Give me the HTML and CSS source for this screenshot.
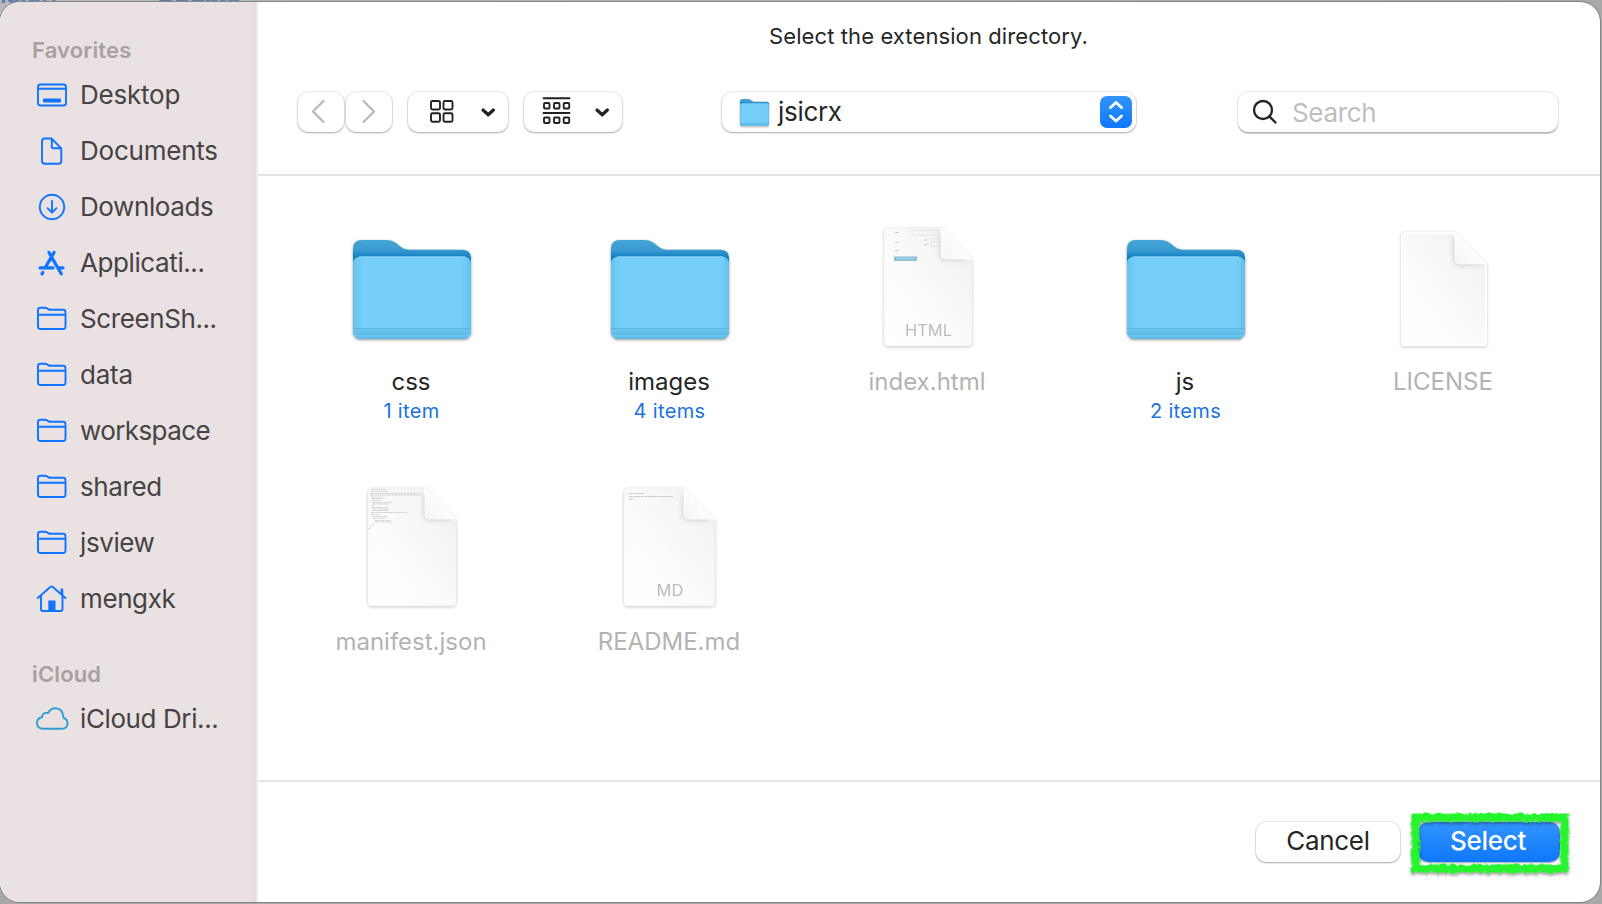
FILE: index.html
```
<!DOCTYPE html>
<html lang="en">
<head>
<meta charset="utf-8">
<title>Select the extension directory</title>
<link rel="stylesheet" href="styles.css">
</head>
<body>
<svg class="defs" width="0" height="0" aria-hidden="true">
  <defs>
    <linearGradient id="back" x1="0" y1="0" x2="0" y2="1"><stop offset="0" stop-color="#45a5d8"/><stop offset=".2" stop-color="#3a9bd0"/><stop offset=".34" stop-color="#1180c2"/><stop offset="1" stop-color="#1180c2"/></linearGradient>
    <linearGradient id="front" x1="0" y1="0" x2="1" y2="0"><stop offset="0" stop-color="#68c3ee"/><stop offset=".08" stop-color="#76cff8"/><stop offset=".92" stop-color="#76cff8"/><stop offset="1" stop-color="#64c0ec"/></linearGradient>
    <linearGradient id="paper" x1="0" y1="1" x2="1" y2="0"><stop offset="0" stop-color="#fff"/><stop offset=".4" stop-color="#fcfcfc"/><stop offset="1" stop-color="#efefef"/></linearGradient>
    <linearGradient id="flap" x1="0" y1="1" x2=".6" y2=".4"><stop offset="0" stop-color="#f4f4f4"/><stop offset="1" stop-color="#fff"/></linearGradient>
    <filter id="soft" x="-30%" y="-30%" width="160%" height="160%"><feGaussianBlur stdDeviation="2.4"/></filter>
    <filter id="rough" x="-5%" y="-10%" width="110%" height="120%"><feTurbulence type="fractalNoise" baseFrequency=".22" numOctaves="2" seed="4"/><feDisplacementMap in="SourceGraphic" scale="5" xChannelSelector="R" yChannelSelector="G"/></filter>
  </defs>
  <symbol id="i-folder" viewBox="0 0 32 28"><path d="M2 21.500V5Q2 2.800 4.200 2.800H9q1.300 0 2.200.7l1 .6q.9.600 2.200.600H27Q29.500 4.700 29.500 7.200v14.300Q29.500 24 27 24H4.500Q2 24 2 21.500ZM2 9.700H29.500"/></symbol>
  <symbol id="folder" viewBox="0 0 118 99">
    <path fill="url(#back)" d="M0 9Q0 0 9 0H34Q39 0 43 3L47.500 6.800Q51 9.700 56 9.700H109Q118 9.700 118 18V50H0Z"/>
    <path fill="url(#front)" d="M0 24Q0 16.500 8 16.500H110Q118 16.500 118 24V90Q118 99 109 99H9Q0 99 0 90Z"/>
    <path fill="#67c2ee" d="M0 88H118V90Q118 99 109 99H9Q0 99 0 90Z"/>
    <path fill="none" stroke="#5cb6e2" d="M0 88.500H118M0 93.500H118M4 98.300H114"/>
    <path fill="none" stroke="#8cd7fa" d="M6 17H112"/>
  </symbol>
</svg>

<div class="backdrop" aria-hidden="true"><span class="behind behind-a">ision</span><span class="behind behind-b">Update</span></div>

<div class="dialog">
  <aside class="sidebar">
    <h2 class="group">Favorites</h2>
    <ul class="places">
      <li class="place"><svg class="glyph" viewBox="0 0 32 28"><rect x="2" y="3.500" width="28" height="21" rx="2.500"/><path d="M2 7.800H30"/><path class="solid" d="M8 17.500h16q1 0 1 1v2q0 1-1 1H8q-1 0-1-1v-2q0-1 1-1Z"/></svg><span>Desktop</span></li>
      <li class="place"><svg class="glyph" viewBox="0 0 32 28"><path d="M8.800 1.500H15.500L25.300 11.300V24Q25.300 26.700 22.500 26.700H8.800Q6 26.700 6 24V4.300Q6 1.500 8.800 1.500ZM15.800 2V9.500Q15.800 11.300 17.600 11.300H25"/></svg><span>Documents</span></li>
      <li class="place"><svg class="glyph" viewBox="0 0 32 28"><circle cx="16" cy="14" r="12.200"/><path d="M16 8V19.500M11.500 15.200L16 19.700L20.500 15.200"/></svg><span class="w-down">Downloads</span></li>
      <li class="place"><svg class="glyph" viewBox="0 0 32 28"><path class="thick" d="M4 18.800H17M23 18.800H27M13 3.500L25.200 24.800M18 3.500L9.300 18.500M6.800 23.500L6 24.800"/></svg><span class="w-down">Applicati...</span></li>
      <li class="place"><svg class="glyph"><use href="#i-folder"/></svg><span class="w-down">ScreenSh...</span></li>
      <li class="place"><svg class="glyph"><use href="#i-folder"/></svg><span>data</span></li>
      <li class="place"><svg class="glyph"><use href="#i-folder"/></svg><span class="w-work">workspace</span></li>
      <li class="place"><svg class="glyph"><use href="#i-folder"/></svg><span class="w-down">shared</span></li>
      <li class="place"><svg class="glyph"><use href="#i-folder"/></svg><span class="w-down">jsview</span></li>
      <li class="place"><svg class="glyph" viewBox="0 0 32 28"><path d="M1.800 13L14.600 1.800Q15.600 1 16.600 1.800L29.400 13M5 11V24Q5 26 7 26H24.500Q26.500 26 26.500 24V11"/><path class="solid" d="M12.300 26V15.500H19.500V26ZM24.500 3.500H27.200V11L24.500 8.500Z"/></svg><span class="w-down">mengxk</span></li>
    </ul>
    <h2 class="group group-cloud">iCloud</h2>
    <ul class="places">
      <li class="place"><svg class="glyph cloud" viewBox="0 0 32 28"><path d="M7.500 23.800Q1 23.800 1 17.800Q1 13 6 12.200Q6.500 7 12 8Q14.500 3.200 19.500 3.200Q27 3.200 27.500 13Q31.500 14 31.500 18.300Q31.500 23.800 25.500 23.800Z"/></svg><span class="w-down">iCloud Dri...</span></li>
    </ul>
  </aside>

  <main class="main">
    <header class="header">
      <h1 class="title">Select the extension directory.</h1>
      <div class="toolbar">
        <div class="nav">
          <button class="control arrow"><svg width="46" height="40"><path d="M25.500 9L15 19.500L25.500 30"/></svg></button>
          <button class="control arrow"><svg width="46" height="40"><path d="M17.500 9L28 19.500L17.500 30"/></svg></button>
        </div>
        <button class="control view"><svg width="101" height="40"><rect x="23" y="9" width="9" height="8.500" rx="1.500"/><rect x="35.500" y="9" width="9" height="8.500" rx="1.500"/><rect x="23" y="21.300" width="9" height="8.500" rx="1.500"/><rect x="35.500" y="21.300" width="9" height="8.500" rx="1.500"/><path class="chev" d="M75 18L80.200 22.800L85.400 18"/></svg></button>
        <button class="control arrange"><svg width="98" height="40"><path d="M19.500 6.300H45.500M19.500 21H45.500"/><g><rect x="20" y="11" width="5.500" height="5.500" rx="1"/><rect x="30" y="11" width="5.500" height="5.500" rx="1"/><rect x="39.700" y="11" width="5.500" height="5.500" rx="1"/><rect x="20" y="25.500" width="5.500" height="5.500" rx="1"/><rect x="30" y="25.500" width="5.500" height="5.500" rx="1"/><rect x="39.700" y="25.500" width="5.500" height="5.500" rx="1"/></g><path class="chev" d="M73 18L78.200 22.800L83.400 18"/></svg></button>
        <button class="control path"><svg class="mini" preserveAspectRatio="none" viewBox="0 0 118 99"><use href="#folder" width="118" height="99"/></svg><span class="label">jsicrx</span><svg class="stepper" width="32" height="32"><path d="M10.500 11.500L16 6.500L21.500 11.500M10.500 20L16 25L21.500 20"/></svg></button>
        <div class="control search"><svg width="28" height="28"><circle cx="12" cy="12" r="9"/><path d="M18.400 18.400L24.500 24.500"/></svg><span>Search</span></div>
      </div>
    </header>

    <section class="files">
      <div class="file"><div class="art"><svg class="folder"><use href="#folder"/></svg></div><div class="name">css</div><div class="count">1 item</div></div>
      <div class="file"><div class="art"><svg class="folder"><use href="#folder"/></svg></div><div class="name">images</div><div class="count">4 items</div></div>
      <div class="file dim"><div class="art"><svg class="doc" width="88" height="118"><path class="sheet" d="M4 0H57L88 31V114Q88 118 84 118H4Q0 118 0 114V4Q0 0 4 0Z"/><path class="faint" d="M28 2.500H57M28 7H57M28 2.500V7M47 10.500H57M47 14H57M47 18.500H57M47 10.500V18.500"/><path class="lines" d="M11 4.500h4M11 14.500h3M11 22.500h4M40 12h4M40 16.500h5"/><path fill="#8dbedc" d="M10 28.500h23v4.500H10z"/><path stroke="#bcdced" stroke-dasharray="2 .7" d="M12 30.700h19"/><path class="fold-shade" d="M56 5V27Q56 32 61 32H84Z"/><path class="flap" d="M57 0L88 31H61Q57 31 57 27Z"/><text x="44.500" y="107.500">HTML</text></svg></div><div class="name">index.html</div></div>
      <div class="file"><div class="art"><svg class="folder"><use href="#folder"/></svg></div><div class="name">js</div><div class="count">2 items</div></div>
      <div class="file dim"><div class="art"><svg class="doc blank" width="86" height="114"><path class="sheet" d="M3 0H54L86 32V111Q86 114 83 114H3Q0 114 0 111V3Q0 0 3 0Z"/><path class="rim" d="M3 1H54L85 32V110Q85 113 82 113H4Q1 113 1 110V3"/><path class="fold-shade" d="M53 5V28Q53 33 58 33H82Z"/><path class="flap" d="M54 0L86 32H58Q54 32 54 28Z"/></svg></div><div class="name">LICENSE</div></div>
      <div class="file dim"><div class="art"><svg class="doc manifest" width="89" height="118"><path class="sheet" d="M4 0H57L88 31V114Q88 118 84 118H4Q0 118 0 114V4Q0 0 4 0Z"/><path class="lines code" d="M3 1.500h15M3 3.500h17M2 5.500h50M2 7h52M3 9h12M4 10.500h13M3 12.500h10M4 14.500h20M5 16h16M3 17.500h3M4 19.500h16M5 21h16M4 22.500h17M3 24.500h36M3 26.500h8M4 28.500h16M5 30.500h12M7 32.500h16M7 34h17M4 36.500h2M2 38.500h2M0 40.500h2"/><path class="fold-shade" d="M56 5V27Q56 32 61 32H84Z"/><path class="flap" d="M57 0L88 31H61Q57 31 57 27Z"/></svg></div><div class="name">manifest.json</div></div>
      <div class="file dim"><div class="art"><svg class="doc readme" width="91" height="118"><path class="sheet" d="M4 0H60L91 31V114Q91 118 87 118H4Q0 118 0 114V4Q0 0 4 0Z"/><path class="lines" d="M5 5.500h15M5 8.500h44M5 11h6"/><path class="fold-shade" d="M59 5V27Q59 32 64 32H87Z"/><path class="flap" d="M60 0L91 31H64Q60 31 60 27Z"/><text x="46" y="107.500">MD</text></svg></div><div class="name">README.md</div></div>
    </section>

    <footer class="footer">
      <button class="control action">Cancel</button>
      <div class="primary-wrap">
        <button class="control action primary">Select</button>
        <svg class="marker" width="168" height="70"><rect x="9.500" y="9.500" width="149" height="51"/></svg>
      </div>
    </footer>
  </main>
</div>
</body>
</html>
```
FILE: styles.css
```
* { box-sizing: border-box; }
body {
  margin: 0;
  width: 1602px;
  height: 904px;
  padding: 2px 2px 2px 0;
  overflow: hidden;
  background: #a8a8a8;
  font-family: Inter, "Liberation Sans", sans-serif;
  color: #262626;
}
ul { list-style: none; margin: 0; padding: 0; }
h1, h2 { margin: 0; }
button { font: inherit; color: inherit; padding: 0; border: 0; }
svg { display: block; flex: none; }
.defs { position: absolute; }

.backdrop { position: absolute; left: 0; top: 0; width: 1602px; height: 20px; overflow: hidden; background: linear-gradient(90deg, #b9b9b9, #a8a8a8); }
.behind { position: absolute; top: -21px; font-size: 26px; line-height: 30px; font-weight: 600; color: #5a80b4; }
.behind-a { left: 0; letter-spacing: -.6px; }
.behind-b { left: 156px; letter-spacing: -1.2px; }

.dialog {
  position: relative;
  display: flex;
  height: 900px;
  border-radius: 20px;
  overflow: hidden;
  background: #fff;
  box-shadow: 0 0 0 1px #858585;
}
.sidebar { width: 258px; padding-top: 34px; background: linear-gradient(90deg, #e9e1e2 250px, #e4dcdd 256px) padding-box; border-right: 2px solid #eeecec; }
.group { height: 28px; margin: 0 0 3px 32px; font-size: 22px; line-height: 28px; font-weight: 600; color: #aaa0a1; letter-spacing: .15px; }
.group-cloud { margin-top: 33px; }
.place { display: flex; align-items: center; height: 56px; padding-left: 36px; gap: 12px; font-size: 26px; line-height: 32px; color: #464344; letter-spacing: -.22px; white-space: nowrap; }
.w-down { letter-spacing: -.4px; }
.w-work { letter-spacing: -.6px; }
.glyph { width: 32px; height: 28px; overflow: visible; fill: none; stroke: #0f74ff; stroke-width: 1.9; stroke-linecap: round; stroke-linejoin: round; }
.glyph .solid { fill: #0f74ff; stroke: none; }
.glyph .thick { stroke-width: 3.2; }
.cloud { stroke: #2f9fd0; }

.main { flex: 1; display: flex; flex-direction: column; }
.header { height: 174px; border-bottom: 2px solid #e4e4e4; }
.title { margin-top: 19px; padding-right: 1px; height: 30px; text-align: center; font-size: 22px; line-height: 30px; font-weight: 400; letter-spacing: .1px; }
.toolbar { display: flex; align-items: center; margin: 41px 42px 0 40px; height: 40px; }
.control { height: 40px; border-radius: 10px; background: #fff; box-shadow: 0 0 0 1px rgba(0,0,0,.07), 0 1px 2px rgba(0,0,0,.28); }
.control svg { fill: none; stroke: #222; stroke-width: 1.900; stroke-linecap: round; stroke-linejoin: round; }
.nav { display: flex; gap: 2px; margin-right: 16px; }
.arrow { width: 46px; }
.control.arrow svg { stroke: #b8b8b8; stroke-width: 2.200; }
.control .chev { stroke-width: 3.200; }
.view { width: 100px; margin-right: 16px; }
.arrange { width: 98px; margin-right: 100px; }
.path { display: flex; align-items: center; width: 414px; padding: 0 4px 0 18px; margin-right: 102px; font-size: 26px; }
.label { padding-bottom: 2px; letter-spacing: -.3px; }
.mini { width: 29px; height: 27px; margin-right: 9px; filter: drop-shadow(0 1px 1px rgba(0,0,0,.3)); }
.control .mini { stroke: none; }
.control .stepper { margin-left: auto; border-radius: 7px; background: linear-gradient(#3294fc, #0f78fb); stroke: #fff; stroke-width: 2.800; }
.search { display: flex; align-items: center; width: 320px; padding-left: 13px; gap: 13px; font-size: 26px; letter-spacing: -.35px; color: #bebebe; box-shadow: 0 0 0 1px rgba(0,0,0,.08), 0 1.500px 1px rgba(0,0,0,.22); }
.search svg { stroke-width: 2.300; }

.files { display: grid; grid-template-columns: repeat(5, 258px); grid-auto-rows: 260px; height: 604px; padding: 47px 0 0 25px; }
.file { display: flex; flex-direction: column; align-items: center; }
.art { display: flex; align-items: center; justify-content: center; height: 128px; }
.folder { width: 118px; height: 99px; margin-top: 4px; filter: drop-shadow(0 1.500px 1.500px rgba(0,0,0,.4)); }
.name { margin-top: 16px; padding-right: 2px; font-size: 24px; line-height: 30px; white-space: nowrap; }
.count { padding-right: 1px; line-height: 29px; font-size: 20px; color: #1a73dc; letter-spacing: .35px; }
.dim .name { color: #b3b3b3; }
.doc { overflow: visible; filter: drop-shadow(0 1.500px 1.500px rgba(0,0,0,.2)); }
.blank { margin-top: 4px; }
.readme { margin-right: 2px; }
.sheet { fill: url(#paper); stroke: #ededed; stroke-width: .6; }
.rim { fill: none; stroke: #fff; stroke-width: 2; }
.fold-shade { fill: #c9c9c9; filter: url(#soft); }
.flap { fill: url(#flap); stroke: #fff; stroke-width: .8; }
.lines { fill: none; stroke: #c8c8c8; stroke-width: 1; stroke-dasharray: 3 .6 2 .5; }
.code { stroke: #d2d2d2; }
.faint { fill: none; stroke: #e0e0e0; stroke-width: .8; }
.doc text { font-size: 16.500px; fill: #bcbcbc; text-anchor: middle; }

.footer { display: flex; justify-content: flex-end; align-items: center; gap: 18px; height: 122px; padding-right: 40px; border-top: 2px solid #e4e4e4; }
.action { width: 144px; padding-bottom: 3px; font-size: 26px; letter-spacing: -.3px; }
.primary-wrap { position: relative; }
.primary { display: block; width: 142px; padding-right: 2px; color: #fff; font-weight: 500; letter-spacing: -.3px; background: linear-gradient(#3294fc, #0f78fb); }
.marker { position: absolute; left: -12.500px; top: -14px; fill: none; stroke: #26f52d; stroke-width: 8; filter: url(#rough) drop-shadow(0 2px 1.500px rgba(0,0,0,.4)); }
```
